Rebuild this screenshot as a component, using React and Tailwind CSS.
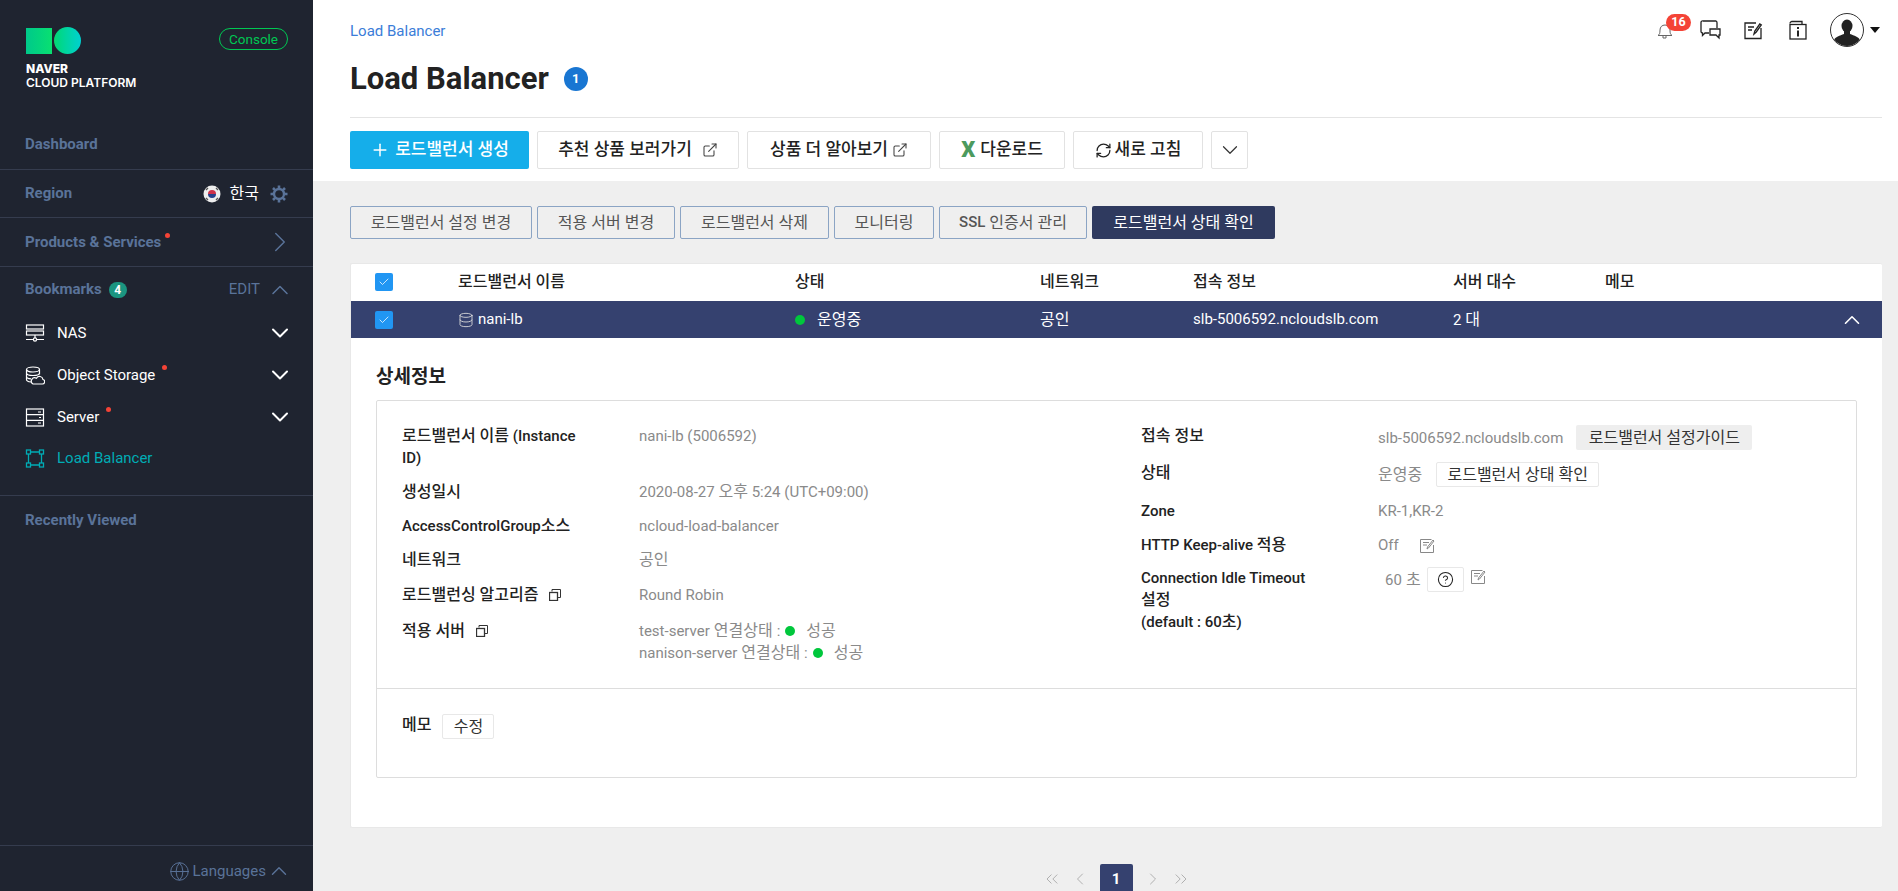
import { Plus, ExternalLink, RefreshCw, ChevronDown, ChevronUp, ChevronRight, ChevronLeft, ChevronsLeft, ChevronsRight, Globe, Check, CircleHelp, Database } from 'lucide-react'

const font = { fontFamily: 'Roboto, "Noto Sans CJK KR", sans-serif' }

/* ── small bits ─────────────────────────────────────────────── */
// hangul runs a size above the latin text around it
function Ko({ children }) {
  return <span className="text-[16px]">{children}</span>
}

function RedDot({ className = '' }) {
  return <span className={`w-[5px] h-[5px] rounded-full bg-[#f44336] inline-block ${className}`} />
}

function GreenDot({ className = '' }) {
  return <span className={`w-[10px] h-[10px] rounded-full bg-[#00c73c] inline-block ${className}`} />
}

function CheckBox() {
  return (
    <span className="w-[18px] h-[18px] rounded-[2px] bg-[#2196f3] flex items-center justify-center">
      <Check size={12} color="#fff" strokeWidth={1.5} />
    </span>
  )
}

function CopyIcon() {
  return (
    <svg width="12" height="12" viewBox="0 0 12 12" fill="none" stroke="#333" strokeWidth="1">
      <rect x="0.5" y="3.5" width="8" height="8" strokeWidth="1.3" />
      <path d="M3 2.5V.5h8.500v8H9" />
    </svg>
  )
}

function EditIcon() {
  return (
    <svg width="15" height="15" viewBox="0 0 15 15" fill="none" stroke="#888" strokeWidth="1">
      <path d="M13.500 7v7.500H.5V1.500h11" />
      <path d="M3 4.500h6M3 7h4" />
      <path d="M7 11l.5-2 5.500-7 1 1-5.500 7z" />
    </svg>
  )
}

/* ── sidebar ────────────────────────────────────────────────── */
function Logo() {
  return (
    <div>
      <div className="flex items-center gap-[2px]">
        <span className="w-[26px] h-[26px] bg-gradient-to-r from-[#00c98a] to-[#0ae070]" />
        <span className="w-[27px] h-[27px] rounded-full bg-gradient-to-r from-[#08d870] to-[#00d0d0]" />
      </div>
      <p className="mt-[8px] text-[12px] leading-[14px] font-extrabold text-white" style={{ fontFamily: 'Inter, sans-serif' }}>NAVER</p>
      <p className="text-[12px] leading-[14px] font-semibold text-white" style={{ fontFamily: 'Inter, sans-serif' }}>CLOUD PLATFORM</p>
    </div>
  )
}

function NasIcon() {
  return (
    <svg width="20" height="18" viewBox="0 0 20 18" fill="none" stroke="#fff" strokeWidth="1.2">
      <rect x="1.500" y="1" width="17" height="4" />
      <rect x="1.500" y="7" width="17" height="4" />
      <path d="M10 11v3M1 15.500h7M12 15.500h7" />
      <circle cx="10" cy="15.500" r="1.600" />
    </svg>
  )
}

function StorageIcon() {
  return (
    <svg width="20" height="19" viewBox="0 0 20 19" fill="none" stroke="#fff" strokeWidth="1.2">
      <ellipse cx="8" cy="3.500" rx="6.500" ry="2.500" />
      <path d="M1.500 3.500v10c0 1.400 2 2.300 4.500 2.500M14.500 3.500v5M1.500 7c0 1.400 3 2.500 6.500 2.500s6.500-1 6.500-2.500M1.500 10.500c0 1.300 2 2.200 4.500 2.400" />
      <path d="M8 18h9.500a2.300 2.300 0 0 0 .5-4.500 3.500 3.500 0 0 0-6.500-1.300A3 3 0 0 0 8 18z" fill="#1f2430" />
    </svg>
  )
}

function ServerIcon() {
  return (
    <svg width="20" height="19" viewBox="0 0 20 19" fill="none" stroke="#fff" strokeWidth="1.2">
      <rect x="1.500" y="1" width="17" height="17" />
      <path d="M1.500 6.700h17M1.500 12.300h17M13 4h3M14 9.500h2M13 15h3" />
    </svg>
  )
}

function LbIcon() {
  return (
    <svg width="20" height="19" viewBox="0 0 20 19" fill="none" stroke="#00acb5" strokeWidth="1.3">
      <rect x="1.500" y="1" width="4" height="4" />
      <rect x="14.500" y="1" width="4" height="4" />
      <rect x="1.500" y="14" width="4" height="4" />
      <rect x="14.500" y="14" width="4" height="4" />
      <path d="M5.500 3h9M5.500 16h9M3.500 5v9M16.500 5v9" />
    </svg>
  )
}

function FlagIcon() {
  return (
    <svg width="18" height="18" viewBox="0 0 18 18">
      <circle cx="9" cy="9" r="8.500" fill="#eee" />
      <path d="M5 9a4 4 0 0 1 8 0z" fill="#d0314a" />
      <path d="M5 9a4 4 0 0 0 8 0z" fill="#27408b" />
      <path d="M3 5l2-2M13 3l2 2M3 13l2 2M13 15l2-2" stroke="#555" strokeWidth="1.300" />
    </svg>
  )
}

function GearIcon() {
  return (
    <svg width="18" height="18" viewBox="0 0 18 18" fill="none" stroke="#5a7399">
      <circle cx="9" cy="9" r="5" strokeWidth="2.400" />
      <path d="M9 .5v3M9 14.500v3M.5 9h3M14.500 9h3M3 3l2.100 2.100M12.900 12.900L15 15M3 15l2.100-2.100M12.900 5.100L15 3" strokeWidth="2.600" />
    </svg>
  )
}

function BookmarkItem({ icon, label, dot }) {
  return (
    <div className="h-[42px] pl-[25px] pr-[25px] flex items-center">
      <span className="w-[32px] flex">{icon}</span>
      <span className="text-[15px] text-white">{label}</span>
      {dot && <RedDot className="self-start mt-[11px] ml-[7px]" />}
      <ChevronDown size={28} color="#fff" strokeWidth={1.700} className="ml-auto -mr-[6px]" />
    </div>
  )
}

function Sidebar() {
  return (
    <aside className="w-[313px] shrink-0 h-[891px] bg-[#1f2430] flex flex-col">
      <div className="h-[120px] pl-[26px] pr-[25px] pt-[27px] flex items-start justify-between">
        <Logo />
        <span className="mt-[1px] h-[22px] w-[69px] rounded-full border-[1.5px] border-[#00c853] text-[#00c853] text-[13.500px] flex items-center justify-center">Console</span>
      </div>
      <div className="h-[50px] pl-[25px] flex items-center border-b border-[#353c4e] text-[15px] font-bold text-[#5a7399]">Dashboard</div>
      <div className="h-[48px] pl-[25px] pr-[25px] flex items-center border-b border-[#353c4e]">
        <span className="text-[15px] font-bold text-[#5a7399]">Region</span>
        <span className="ml-auto flex items-center">
          <FlagIcon />
          <span className="ml-[9px] text-[16px] text-white">한국</span>
          <span className="ml-[11px] flex"><GearIcon /></span>
        </span>
      </div>
      <div className="h-[49px] pl-[25px] pr-[25px] flex items-center border-b border-[#353c4e]">
        <span className="text-[15px] font-bold text-[#5a7399]">Products &amp; Services</span>
        <RedDot className="self-start mt-[15px] ml-[4px]" />
        <ChevronRight size={34} color="#5a7399" strokeWidth={1} className="ml-auto -mr-[9px]" />
      </div>
      <div className="h-[45px] pl-[25px] pr-[25px] flex items-center">
        <span className="text-[15px] font-bold text-[#5a7399]">Bookmarks</span>
        <span className="ml-[7px] w-[18px] h-[16px] rounded-full bg-[#1b9580] text-white text-[12px] font-bold flex items-center justify-center">4</span>
        <span className="ml-auto text-[15px] text-[#5a7399]">EDIT</span>
        <ChevronUp size={28} color="#5a7399" strokeWidth={1.300} className="ml-[6px] -mr-[6px]" />
      </div>
      <div className="flex flex-col border-b border-[#353c4e] pb-[16px]">
        <BookmarkItem icon={<NasIcon />} label="NAS" />
        <BookmarkItem icon={<StorageIcon />} label="Object Storage" dot />
        <BookmarkItem icon={<ServerIcon />} label="Server" dot />
        <div className="h-[41px] pl-[25px] flex items-center">
          <span className="w-[32px] flex"><LbIcon /></span>
          <span className="text-[15px] text-[#00acb5]">Load Balancer</span>
        </div>
      </div>
      <div className="h-[48px] pl-[25px] flex items-center text-[15px] font-bold text-[#5a7399]">Recently Viewed</div>
      <div className="mt-auto h-[46px] pr-[27px] pt-[5px] border-t border-[#353c4e] flex items-center justify-end">
        <Globe size={21} color="#5a7399" strokeWidth={1.100} />
        <span className="text-[15px] text-[#5a7399] ml-[3px]">Languages</span>
        <ChevronUp size={26} color="#5a7399" strokeWidth={1.300} className="-mr-[6px]" />
      </div>
    </aside>
  )
}

/* ── top header ─────────────────────────────────────────────── */
function HeaderIcons() {
  return (
    <div className="flex items-center">
      <span className="relative w-[16px] h-[20px] flex mr-[27px]">
        <svg width="16" height="20" viewBox="0 0 16 20" fill="none" stroke="#666" strokeWidth="1">
          <path d="M1 15.500c1.500-1 2-2 2-5.500 0-3 2-5 5-5s5 2 5 5c0 3.500.500 4.500 2 5.500zM6 16v2h3v-2" />
        </svg>
        <span className="absolute -top-[6px] left-[9px] w-[25px] h-[17px] rounded-full bg-[#f44336] text-white text-[12.500px] font-bold flex items-center justify-center">16</span>
      </span>
      <svg width="21" height="20" viewBox="0 0 21 20" fill="none" stroke="#222" strokeWidth="1.300" className="mr-[23px]">
        <path d="M3 1h13a2 2 0 0 1 1 2v5M9 13H5l-2.500 2.500V13A1.500 1.500 0 0 1 1 11.500V2.500A1.500 1.500 0 0 1 3 1" />
        <path d="M10 9h10v6h-1v3l-3-3h-6z" />
      </svg>
      <svg width="19" height="19" viewBox="0 0 19 19" fill="none" stroke="#222" strokeWidth="1.300" className="mr-[26px]">
        <path d="M17 7v10.500H1V2h11" />
        <path d="M4 6h6M4 9h4" strokeWidth="1.600" />
        <path d="M10 13l.8-3 5-7 1.500 1-5 7z" />
      </svg>
      <svg width="18" height="20" viewBox="0 0 18 20" fill="none" stroke="#222" strokeWidth="1.300" className="mr-[23px]">
        <path d="M1 3.500A2 2 0 0 1 3 1.500h10v3" />
        <rect x="1" y="4.500" width="16" height="14.500" />
        <rect x="8" y="7" width="2" height="2" fill="#222" stroke="none" />
        <rect x="8" y="10.500" width="2" height="6" fill="#222" stroke="none" />
      </svg>
      <svg width="34" height="34" viewBox="0 0 34 34">
        <defs>
          <clipPath id="avatarClip"><circle cx="17" cy="17" r="16" /></clipPath>
        </defs>
        <circle cx="17" cy="17" r="16.500" fill="#fff" stroke="#333" />
        <g clipPath="url(#avatarClip)" fill="#222">
          <ellipse cx="17" cy="13" rx="5.500" ry="6.500" />
          <path d="M14 18h6v3c4 1.500 9 3 10 6v7H4v-7c1-3 6-4.500 10-6z" />
        </g>
      </svg>
      <span className="ml-[6px] w-0 h-0 border-l-[5px] border-r-[5px] border-t-[6px] border-l-transparent border-r-transparent border-t-[#111]" />
    </div>
  )
}

function ToolButton({ children, className = '' }) {
  return (
    <button className={`h-[38px] rounded-[2px] border border-[#e2e2e2] bg-white text-[17px] font-medium text-[#222] flex items-center justify-center ${className}`}>
      {children}
    </button>
  )
}

function TopBar() {
  return (
    <header className="bg-white h-[181px] pl-[37px] pr-[16px] shrink-0">
      <div className="h-[118px] border-b border-[#e4e4e4] relative">
        <div className="pt-[21px] text-[15px] leading-[20px] text-[#3b7dd8]">Load Balancer</div>
        <div className="mt-[16px] flex items-center">
          <h1 className="text-[31px] leading-[44px] font-bold text-[#222]">Load Balancer</h1>
          <span className="ml-[15px] w-[24px] h-[24px] rounded-full bg-[#1976d2] text-white text-[13px] font-bold flex items-center justify-center">1</span>
        </div>
        <div className="absolute right-[2px] top-[13px]"><HeaderIcons /></div>
      </div>
      <div className="mt-[13px] flex gap-[8px]">
        <button className="w-[179px] h-[38px] rounded-[2px] bg-[#15aeea] text-white text-[17px] font-medium flex items-center justify-center gap-[5px]">
          <Plus size={20} strokeWidth={1.800} />로드밸런서 생성
        </button>
        <ToolButton className="w-[202px] gap-[10px]">추천 상품 보러가기 <ExternalLink size={16} color="#444" strokeWidth={1.600} /></ToolButton>
        <ToolButton className="w-[184px] gap-[4px]">상품 더 알아보기 <ExternalLink size={16} color="#444" strokeWidth={1.600} /></ToolButton>
        <ToolButton className="w-[126px] gap-[5px]"><span className="text-[#4c9a5e] text-[22px] font-black leading-none">X</span>다운로드</ToolButton>
        <ToolButton className="w-[130px] gap-[3px]"><RefreshCw size={17} color="#222" strokeWidth={1.800} />새로 고침</ToolButton>
        <ToolButton className="w-[37px]"><ChevronDown size={26} color="#333" strokeWidth={1.100} /></ToolButton>
      </div>
    </header>
  )
}

/* ── table + detail ─────────────────────────────────────────── */
function ActionButton({ children, className = '' }) {
  return (
    <button className={`h-[33px] rounded-[2px] border border-[#8ba4c4] text-[16px] text-[#555] flex items-center justify-center ${className}`}>
      {children}
    </button>
  )
}

function InfoRow({ label, children, className = '' }) {
  return (
    <div className={`flex text-[15px] leading-[22px] ${className}`}>
      <div className="w-[237px] shrink-0">
        <div className="w-[190px] font-medium text-[#222]">{label}</div>
      </div>
      <div className="text-[#8a8a8a] min-w-0">{children}</div>
    </div>
  )
}

function DetailPanel() {
  return (
    <div className="px-[25px] pt-[25px] pb-[49px]">
      <h3 className="text-[19px] leading-[28px] font-bold text-[#222]">상세정보</h3>
      <div className="mt-[9px] h-[378px] rounded-[2px] border border-[#ddd] flex flex-col">
        <div className="h-[288px] pl-[25px] pt-[24px] flex border-b border-[#ddd]">
          <div className="w-[739px] shrink-0">
            <InfoRow label={<><Ko>로드밸런서 이름</Ko> (Instance<br />ID)</>}>nani-lb (5006592)</InfoRow>
            <InfoRow label={<Ko>생성일시</Ko>} className="mt-[12px]">2020-08-27 <Ko>오후</Ko> 5:24 (UTC+09:00)</InfoRow>
            <InfoRow label={<>AccessControlGroup<Ko>소스</Ko></>} className="mt-[12px]">ncloud-load-balancer</InfoRow>
            <InfoRow label={<Ko>네트워크</Ko>} className="mt-[12px]"><Ko>공인</Ko></InfoRow>
            <InfoRow label={<span className="flex items-center gap-[11px]"><Ko>로드밸런싱 알고리즘</Ko> <CopyIcon /></span>} className="mt-[13px]">Round Robin</InfoRow>
            <InfoRow label={<span className="flex items-center gap-[11px]"><Ko>적용 서버</Ko> <CopyIcon /></span>} className="mt-[14px]">
              <div className="flex items-center gap-[4px]">test-server <Ko>연결상태</Ko> :<GreenDot className="ml-[1px] mr-[7px]" /><Ko>성공</Ko></div>
              <div className="flex items-center gap-[4px]">nanison-server <Ko>연결상태</Ko> :<GreenDot className="ml-[1px] mr-[7px]" /><Ko>성공</Ko></div>
            </InfoRow>
          </div>
          <div className="flex-1">
            <InfoRow label={<Ko>접속 정보</Ko>}>
              <div className="flex items-center">slb-5006592.ncloudslb.com
                <span className="ml-[13px] h-[25px] w-[176px] rounded-[2px] bg-[#eeeeee] text-[16px] text-[#333] flex items-center justify-center">로드밸런서 설정가이드</span>
              </div>
            </InfoRow>
            <InfoRow label={<Ko>상태</Ko>} className="mt-[12px]">
              <div className="flex items-center"><Ko>운영중</Ko>
                <span className="ml-[14px] h-[25px] w-[163px] rounded-[2px] bg-white border border-[#e8e8e8] text-[16px] text-[#333] flex items-center justify-center">로드밸런서 상태 확인</span>
              </div>
            </InfoRow>
            <InfoRow label="Zone" className="mt-[13px]">KR-1,KR-2</InfoRow>
            <InfoRow label={<>HTTP Keep-alive <Ko>적용</Ko></>} className="mt-[12px]">
              <div className="flex items-center gap-[21px]">Off <EditIcon /></div>
            </InfoRow>
            <InfoRow label={<>Connection Idle Timeout<br /><Ko>설정</Ko><br />(default : 60<Ko>초</Ko>)</>} className="mt-[11px]">
              <div className="flex items-center pl-[7px] gap-[4px]">60 <Ko>초</Ko>
                <span className="ml-[2px] w-[37px] h-[25px] rounded-[2px] border border-[#e8e8e8] flex items-center justify-center"><CircleHelp size={17} color="#222" strokeWidth={1.500} /></span>
                <span className="ml-[3px] flex self-start mt-[2px]"><EditIcon /></span>
              </div>
            </InfoRow>
          </div>
        </div>
        <div className="pl-[25px] pt-[25px] flex items-start text-[16px] leading-[22px] self-start">
          <span className="font-medium text-[#222]">메모</span>
          <span className="ml-[11px] w-[52px] h-[25px] rounded-[2px] border border-[#e8e8e8] text-[#333] flex items-center justify-center">수정</span>
        </div>
      </div>
    </div>
  )
}

function LbTable() {
  return (
    <div className="mt-[24px] bg-white rounded-[2px] border border-[#e8e8e8] border-r-0">
      <div className="h-[37px] pb-[2px] flex items-center text-[16px] font-medium text-[#222]">
        <span className="w-[107px] pl-[24px]"><CheckBox /></span>
        <span className="w-[337px]">로드밸런서 이름</span>
        <span className="w-[245px]">상태</span>
        <span className="w-[153px]">네트워크</span>
        <span className="w-[260px]">접속 정보</span>
        <span className="w-[152px]">서버 대수</span>
        <span>메모</span>
      </div>
      <div className="h-[37px] bg-[#35416f] flex items-center text-[15px] text-white">
        <span className="w-[107px] pl-[24px]"><CheckBox /></span>
        <span className="w-[337px] flex items-center gap-[4px]"><Database size={16} color="#ddd" strokeWidth={1.300} /><span>nani-lb</span></span>
        <span className="w-[245px] flex items-center gap-[12px]"><GreenDot /><Ko>운영중</Ko></span>
        <span className="w-[153px]"><Ko>공인</Ko></span>
        <span className="w-[260px]">slb-5006592.ncloudslb.com</span>
        <span className="w-[152px]">2 <Ko>대</Ko></span>
        <ChevronUp size={26} color="#fff" strokeWidth={1.500} className="ml-auto mr-[17px]" />
      </div>
      <DetailPanel />
    </div>
  )
}

function Pagination() {
  return (
    <div className="mt-[36px] h-[30px] flex items-center justify-center">
      <ChevronsLeft size={20} color="#aaa" strokeWidth={1.100} />
      <ChevronLeft size={20} color="#aaa" strokeWidth={1.100} className="ml-[8px]" />
      <span className="mx-[10px] w-[33px] h-[30px] rounded-t-[2px] bg-[#35416f] text-white text-[15px] font-bold flex items-center justify-center">1</span>
      <ChevronRight size={20} color="#aaa" strokeWidth={1.100} />
      <ChevronsRight size={20} color="#aaa" strokeWidth={1.100} className="ml-[8px]" />
    </div>
  )
}

export default function App() {
  return (
    <div className="w-[1898px] h-[891px] flex overflow-hidden bg-[#efefef]" style={font}>
      <Sidebar />
      <main className="flex-1 min-w-0 flex flex-col">
        <TopBar />
        <div className="pl-[37px] pr-[16px] pt-[25px]">
          <div className="flex gap-[5px]">
            <ActionButton className="w-[182px]">로드밸런서 설정 변경</ActionButton>
            <ActionButton className="w-[138px]">적용 서버 변경</ActionButton>
            <ActionButton className="w-[149px]">로드밸런서 삭제</ActionButton>
            <ActionButton className="w-[100px]">모니터링</ActionButton>
            <ActionButton className="w-[148px]"><span className="text-[15px] font-medium mr-[4px]">SSL</span>인증서 관리</ActionButton>
            <button className="w-[183px] h-[33px] rounded-[2px] bg-[#2f3a5f] text-white text-[16px] flex items-center justify-center">로드밸런서 상태 확인</button>
          </div>
          <LbTable />
          <Pagination />
        </div>
      </main>
    </div>
  )
}
